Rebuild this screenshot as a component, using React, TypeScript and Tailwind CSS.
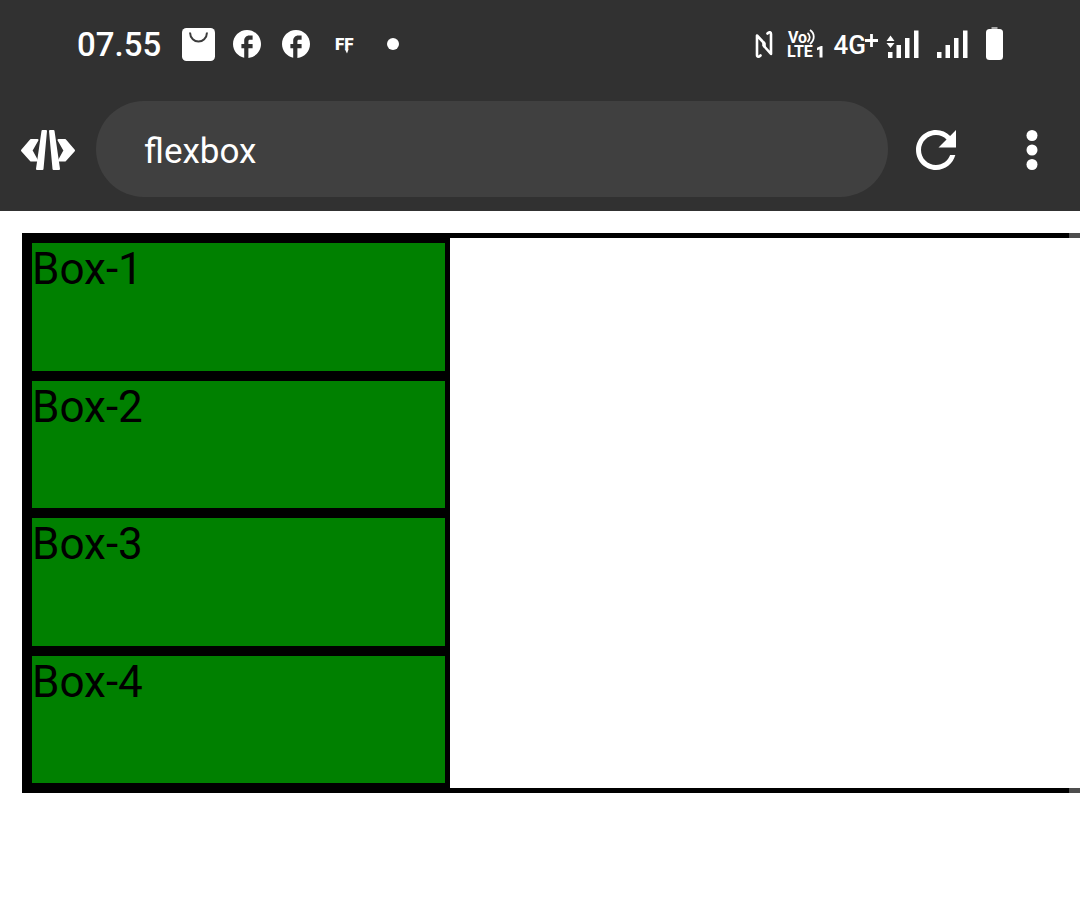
import React from "react";

function FacebookIcon() {
  return (
    <svg viewBox="2 2 20 20" className="size-7 fill-white" aria-hidden="true">
      <path d="M22 12c0-5.52-4.48-10-10-10S2 6.48 2 12c0 4.84 3.44 8.87 8 9.8V15H8v-3h2V9.5C10 7.57 11.57 6 13.5 6H16v3h-2c-.55 0-1 .45-1 1v2h3v3h-3v6.95c5.05-.5 9-4.76 9-9.95z" />
    </svg>
  );
}

function SignalIcon({ arrows = false }: { arrows?: boolean }) {
  return (
    <svg viewBox="0 0 32 28" className="h-7 w-8 fill-white" aria-hidden="true">
      <rect x="1" y="21" width="4.5" height="6" />
      <rect x="9.5" y="14" width="4.5" height="13" />
      <rect x="18" y="7" width="4.5" height="20" />
      <rect x="27" y="-0.5" width="4.5" height="27.5" />
      {arrows && <path d="M-0.500 10 3.500 4.500l4 5.500zM-0.500 12h8l-4 5z" />}
    </svg>
  );
}

function StatusBar() {
  return (
    <div className="flex h-[89px] items-center justify-between px-[77px] text-white">
      <div className="flex items-center">
        <time className="text-[33px] leading-10 font-medium">07.55</time>
        <svg viewBox="0 0 33 33" className="ml-[21px] size-[33px]" aria-hidden="true">
          <rect width="33" height="33" rx="4.5" fill="#fff" />
          <path d="M8 4.500c.5 12 16.500 12 17 0" fill="none" stroke="#3c3c3c" strokeWidth="2" />
        </svg>
        <div className="mb-[2px] ml-[18px] flex gap-[21px]">
          <FacebookIcon />
          <FacebookIcon />
        </div>
        <svg viewBox="0 0 20 18" className="ml-[25px] h-[18px] w-5 overflow-visible fill-white" aria-hidden="true">
          <text x="0" y="14" fontFamily="Roboto" fontWeight="900" fontSize="17">FF</text>
          <path d="M10 13.500h3.500L12 17.500z" />
        </svg>
        <span className="mb-px ml-8 size-3 rounded-full bg-white" />
      </div>
      <div className="flex items-center">
        <svg viewBox="0 0 18 28" className="h-7 w-[18px]" fill="none" stroke="#fff" strokeWidth="2.6" strokeLinecap="round" strokeLinejoin="round" aria-label="NFC">
          <path d="M5.500 24.500C4 26 2 26.500 2 24V4.500L9.500 12.500v3" />
          <path d="M12.500 2.500C14 1 16 .5 16 3v20L8.500 14.500v-3" />
        </svg>
        <svg viewBox="0 0 36 30" className="ml-[14px] h-[30px] w-9 overflow-visible fill-white" aria-label="VoLTE 1">
          <text fontFamily="Roboto" fontWeight="700" fontSize="16">
            <tspan x="1" y="13">Vo</tspan>
            <tspan x="0" y="27">LTE</tspan>
          </text>
          <path d="M20.500 3c3 2 3 6.500 0 9M23 0c5 3.500 5 10 0 14" fill="none" stroke="#fff" strokeWidth="1.8" />
          <path d="M35.500 16v11.500h-3v-8l-2.500.8v-2.500l4-1.800z" />
        </svg>
        <span className="ml-[11px] text-[26px] leading-8 font-medium">4G</span>
        <svg viewBox="0 0 13 13" className="mb-2 -ml-px size-[13px]" stroke="#fff" strokeWidth="2.8" aria-label="plus">
          <path d="M6.500 0v13M0 6.500h13" />
        </svg>
        <div className="ml-[9px] flex gap-[17px] [&>svg]:overflow-visible">
          <SignalIcon arrows />
          <SignalIcon />
        </div>
        <svg viewBox="0 0 17 33" className="mb-[2px] ml-[18px] h-[33px] w-[17px]" aria-label="Battery">
          <rect x="5.5" y="0" width="6" height="4" fill="#aaa" />
          <rect y="2" width="17" height="31" rx="3.5" fill="#fff" />
        </svg>
      </div>
    </div>
  );
}

function AddressBar() {
  return (
    <div className="flex items-center pt-3 pb-[14px]">
      <button type="button" aria-label="Code" className="ml-5 shrink-0 pt-px">
        <svg viewBox="0 0 56 42" className="h-[42px] w-14 fill-white stroke-white" strokeWidth="2" strokeLinejoin="round">
          <path d="M11 11h6.500L11.500 21.500 17 31.500h-6L2 21.500zM45 11h-6.500L44.500 21.500 39 31.500h6L54 21.500z" />
          <path d="M22.500 2h3.500L22.500 40h-5.500zM33.500 2H30L33.500 40h5.500z" />
        </svg>
      </button>
      <input
        type="text"
        aria-label="Address"
        defaultValue="flexbox"
        className="ml-5 h-24 min-w-0 flex-1 rounded-full bg-[#404040] px-12 pt-1 text-[35px] text-white outline-none"
      />
      <button type="button" aria-label="Reload" className="ml-[18px] shrink-0 pt-[2px]">
        <svg viewBox="0 0 24 24" className="size-[60px] fill-white">
          <path d="M17.65 6.35C16.2 4.9 14.21 4 12 4c-4.42 0-7.99 3.58-7.99 8s3.57 8 7.99 8c3.73 0 6.84-2.55 7.73-6h-2.08c-.82 2.33-3.04 4-5.65 4-3.31 0-6-2.69-6-6s2.69-6 6-6c1.66 0 3.14.69 4.22 1.78L13 11h7V4l-2.35 2.35z" />
        </svg>
      </button>
      <button type="button" aria-label="Menu" className="mr-9 ml-[54px] shrink-0 pt-[2px]">
        <svg viewBox="0 0 24 60" className="h-[60px] w-6 fill-white">
          <circle cx="12" cy="15.5" r="5.5" />
          <circle cx="12" cy="30" r="5.5" />
          <circle cx="12" cy="44.5" r="5.5" />
        </svg>
      </button>
    </div>
  );
}

const boxes = ["Box-1", "Box-2", "Box-3", "Box-4"];

export default function App() {
  return (
    <div className="min-h-screen bg-white font-['Roboto',sans-serif]">
      <header className="bg-[#313131]">
        <StatusBar />
        <AddressBar />
      </header>
      <main className="relative pt-[22px] pl-[22px]">
        <div className="flex h-[560px] flex-col border-y-5 border-l-5 border-black">
          {boxes.map((box) => (
            <div
              key={box}
              className="w-[423px] max-w-full flex-1 border-5 border-black bg-[#008000] text-[44px] leading-[52px] text-black"
            >
              {box}
            </div>
          ))}
        </div>
        <div className="absolute inset-y-0 right-0 w-[11px] bg-white/30" />
      </main>
    </div>
  );
}
